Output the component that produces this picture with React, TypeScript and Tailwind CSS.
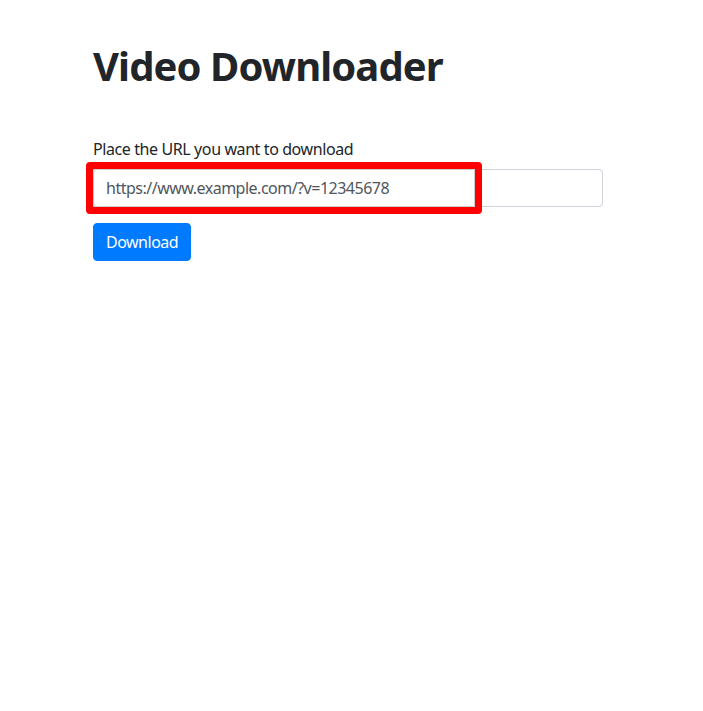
import React, { useState } from 'react';

const App: React.FC = () => {
  const [url, setUrl] = useState('');

  return (
    <div className="min-h-screen bg-white text-[#212529] font-['Noto_Sans',sans-serif]">
      <div className="pl-[93px] pt-[42px] w-[603px]">
        <h1 className="text-[40px] leading-[48px] font-bold mb-2 tracking-[-0.9px]">Video Downloader</h1>
        <form className="mt-[47px]" onSubmit={(e) => e.preventDefault()}>
          <div className="mb-4">
            <label htmlFor="url" className="inline-block mb-2 text-base leading-6 tracking-[-0.4px]">
              Place the URL you want to download
            </label>
            <div className="relative">
              <input
                id="url"
                type="text"
                value={url}
                onChange={(e) => setUrl(e.target.value)}
                placeholder="https://www.example.com/?v=12345678"
                className="block w-full h-[38px] px-3 text-base tracking-[-0.5px] border border-[#ced4da] rounded bg-white text-[#495057] placeholder:text-[#50565c] outline-none"
              />
              {/* annotation highlight */}
              <div className="absolute left-[-7px] top-[-7px] w-[396px] h-[52px] border-[7px] border-[#ff0000] rounded-[4px] pointer-events-none">
                <div className="w-full h-full border border-[#d0d0d0]" />
              </div>
            </div>
          </div>
          <button
            type="submit"
            className="h-[38px] px-3 bg-[#007bff] text-white text-base tracking-[-0.5px] rounded border border-[#007bff]"
          >
            Download
          </button>
        </form>
      </div>
    </div>
  );
};

export default App;
